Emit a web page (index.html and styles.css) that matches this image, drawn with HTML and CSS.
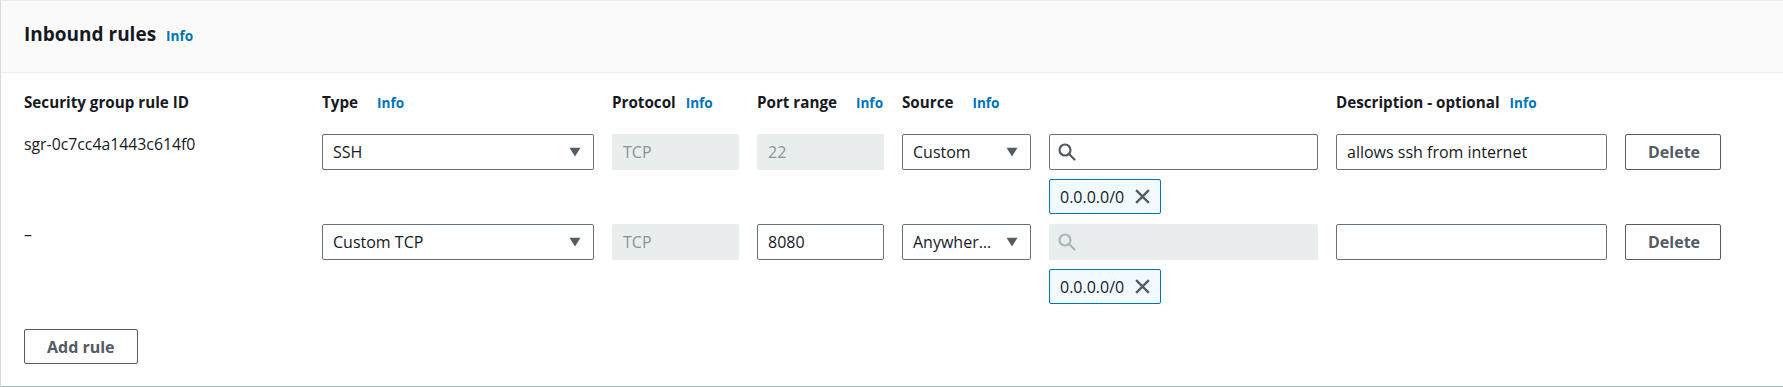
FILE: index.html
```html
<!DOCTYPE html>
<html lang="en">
<head>
    <meta charset="UTF-8">
    <title>Inbound rules</title>
    <link rel="stylesheet" href="styles.css">
</head>
<body>
    <div class="panel">
        <div class="panel-header">
            <h2 class="panel-title">Inbound rules</h2>
            <a class="info" href="#">Info</a>
        </div>

        <div class="panel-body">
            <div class="rules">
                <!-- column labels -->
                <div class="col-label">Security group rule ID</div>
                <div class="col-label">Type <a class="info wide" href="#">Info</a></div>
                <div class="col-label">Protocol <a class="info" href="#">Info</a></div>
                <div class="col-label">Port range <a class="info wide" href="#">Info</a></div>
                <div class="col-label">Source <a class="info wide" href="#">Info</a></div>
                <div class="col-label"></div>
                <div class="col-label">Description - optional <a class="info" href="#">Info</a></div>
                <div class="col-label"></div>

                <!-- rule 1 -->
                <div class="rule-id">sgr-0c7cc4a1443c614f0</div>
                <div class="select"><span class="select-text">SSH</span><svg class="caret" viewBox="0 0 12 10"><path d="M0.5 0.8h11L6 9.5z"/></svg></div>
                <input class="field" type="text" value="TCP" disabled>
                <input class="field" type="text" value="22" disabled>
                <div class="select"><span class="select-text">Custom</span><svg class="caret" viewBox="0 0 12 10"><path d="M0.5 0.8h11L6 9.5z"/></svg></div>
                <div class="source">
                    <div class="search">
                        <svg class="search-icon" viewBox="0 0 18 18"><circle cx="7" cy="7" r="5.5"/><path d="M11.2 11.2L16.5 16.5"/></svg>
                    </div>
                    <div class="token">0.0.0.0/0 <svg class="token-x" viewBox="0 0 16 16"><path d="M2 2l12 12M14 2L2 14"/></svg></div>
                </div>
                <input class="field" type="text" value="allows ssh from internet">
                <button class="btn">Delete</button>

                <!-- rule 2 -->
                <div class="rule-id">–</div>
                <div class="select"><span class="select-text">Custom TCP</span><svg class="caret" viewBox="0 0 12 10"><path d="M0.5 0.8h11L6 9.5z"/></svg></div>
                <input class="field" type="text" value="TCP" disabled>
                <input class="field" type="text" value="8080">
                <div class="select"><span class="select-text">Anywher…</span><svg class="caret" viewBox="0 0 12 10"><path d="M0.5 0.8h11L6 9.5z"/></svg></div>
                <div class="source">
                    <div class="search disabled">
                        <svg class="search-icon" viewBox="0 0 18 18"><circle cx="7" cy="7" r="5.5"/><path d="M11.2 11.2L16.5 16.5"/></svg>
                    </div>
                    <div class="token">0.0.0.0/0 <svg class="token-x" viewBox="0 0 16 16"><path d="M2 2l12 12M14 2L2 14"/></svg></div>
                </div>
                <input class="field" type="text" value="">
                <button class="btn">Delete</button>
            </div>

            <button class="btn add-rule">Add rule</button>
        </div>
    </div>
</body>
</html>
```

FILE: styles.css
```css
* {
    box-sizing: border-box;
}

body {
    margin: 0;
    font-family: "Open Sans", "Noto Sans", sans-serif;
    font-size: 16px;
    color: #16191f;
    background-color: #fff;
    overflow: hidden;
}

.panel {
    border-top: 1px solid #eaeded;
    border-left: 1px solid #d5dbdb;
    border-bottom: 2px solid #aab7b8;
}

.panel-header {
    display: flex;
    align-items: baseline;
    gap: 10px;
    height: 72px;
    padding: 20px 23px 0;
    background-color: #fafafa;
    border-bottom: 1px solid #eaeded;
}

.panel-title {
    margin: 0;
    font-size: 19px;
    line-height: 26px;
    font-weight: bold;
}

.info {
    color: #0073bb;
    font-size: 13.6px;
    font-weight: bold;
    text-decoration: none;
    margin-left: 6px;
}

.panel-header .info {
    margin-left: 0;
}

.info.wide {
    margin-left: 15px;
}

.panel-body {
    padding: 18px 23px 22px;
}

.rules {
    display: grid;
    grid-template-columns: 280px 272px 127px 127px 129px 269px 271px 96px;
    column-gap: 18px;
    row-gap: 10px;
    align-items: start;
}

.col-label {
    font-size: 15.2px;
    font-weight: bold;
    line-height: 22px;
    height: 22px;
    margin-bottom: 11px;
    white-space: nowrap;
}

.rule-id {
    font-size: 15.8px;
    line-height: 22px;
    margin-top: -1px;
}

.field,
.select,
.search {
    width: 100%;
    height: 36px;
    border: 1px solid #687078;
    border-radius: 2px;
    background-color: #fff;
}

.field {
    padding: 0 10px;
    font-family: inherit;
    font-size: 16px;
    color: #16191f;
}

.field:disabled {
    background-color: #eaeded;
    border-color: #eaeded;
    color: #879596;
}

.select {
    display: flex;
    align-items: center;
    padding: 0 12px 0 10px;
}

.select-text {
    flex: 1;
    min-width: 0;
    white-space: nowrap;
}

.caret {
    width: 12px;
    height: 10px;
    margin-left: 10px;
    flex-shrink: 0;
    fill: #545b64;
}

.search {
    display: flex;
    align-items: center;
    padding: 0 8px;
}

.search.disabled {
    background-color: #eaeded;
    border-color: #eaeded;
}

.search-icon {
    width: 18px;
    height: 18px;
    fill: none;
    stroke: #545b64;
    stroke-width: 2.2;
    stroke-linecap: round;
}

.search.disabled .search-icon {
    stroke: #aab7b8;
}

.token {
    display: inline-flex;
    align-items: center;
    gap: 10px;
    height: 35px;
    margin-top: 9px;
    padding: 0 9px 0 10px;
    border: 1px solid #0073bb;
    border-radius: 2px;
    background-color: #f1faff;
    white-space: nowrap;
}

.token-x {
    width: 17px;
    height: 17px;
    fill: none;
    stroke: #545b64;
    stroke-width: 2.2;
}

.btn {
    height: 36px;
    padding: 0 22px;
    border: 1px solid #545b64;
    border-radius: 2px;
    background-color: #fff;
    color: #545b64;
    font-family: inherit;
    font-size: 16px;
    font-weight: bold;
}

.add-rule {
    height: 35px;
    margin-top: 25px;
}
```
